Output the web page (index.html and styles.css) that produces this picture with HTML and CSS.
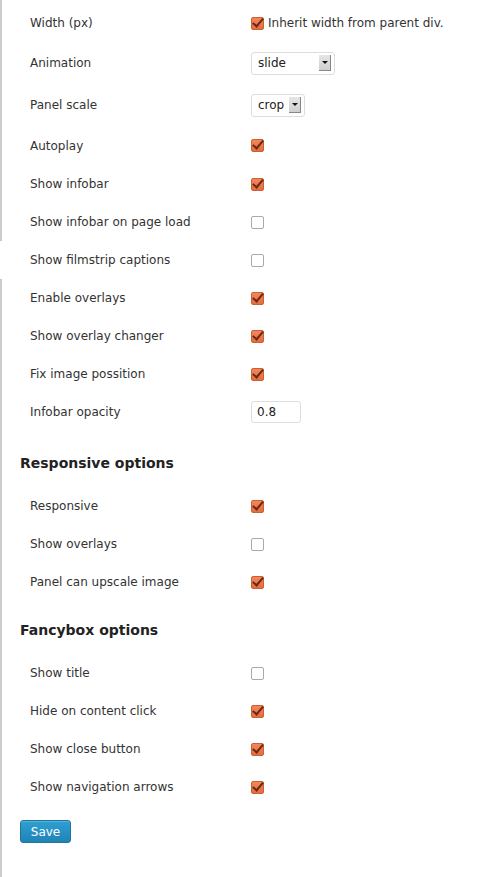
FILE: index.html
```html
<!DOCTYPE html>
<html lang="en">
<head>
  <meta charset="UTF-8">
  <title>Gallery settings</title>
  <link rel="stylesheet" href="styles.css">
</head>
<body>
  <div class="wrap">

    <!-- General options -->
    <div class="form-table">
      <div class="row r-first">
        <div class="label">Width (px)</div>
        <div class="field"><span class="cb on"></span><span class="cb-text">Inherit width from parent div.</span></div>
      </div>
      <div class="row r-select">
        <div class="label">Animation</div>
        <div class="field"><span class="select wide"><span class="val">slide</span><span class="arrow"></span></span></div>
      </div>
      <div class="row r-select">
        <div class="label">Panel scale</div>
        <div class="field"><span class="select"><span class="val">crop</span><span class="arrow"></span></span></div>
      </div>
      <div class="row r-tall">
        <div class="label">Autoplay</div>
        <div class="field"><span class="cb on"></span></div>
      </div>
      <div class="row">
        <div class="label">Show infobar</div>
        <div class="field"><span class="cb on"></span></div>
      </div>
      <div class="row">
        <div class="label">Show infobar on page load</div>
        <div class="field"><span class="cb"></span></div>
      </div>
      <div class="row gap">
        <div class="label">Show filmstrip captions</div>
        <div class="field"><span class="cb"></span></div>
      </div>
      <div class="row">
        <div class="label">Enable overlays</div>
        <div class="field"><span class="cb on"></span></div>
      </div>
      <div class="row">
        <div class="label">Show overlay changer</div>
        <div class="field"><span class="cb on"></span></div>
      </div>
      <div class="row">
        <div class="label">Fix image possition</div>
        <div class="field"><span class="cb on"></span></div>
      </div>
      <div class="row">
        <div class="label">Infobar opacity</div>
        <div class="field"><span class="text-input">0.8</span></div>
      </div>
    </div>

    <h3 class="section first">Responsive options</h3>
    <div class="form-table">
      <div class="row">
        <div class="label">Responsive</div>
        <div class="field"><span class="cb on"></span></div>
      </div>
      <div class="row">
        <div class="label">Show overlays</div>
        <div class="field"><span class="cb"></span></div>
      </div>
      <div class="row">
        <div class="label">Panel can upscale image</div>
        <div class="field"><span class="cb on"></span></div>
      </div>
    </div>

    <h3 class="section">Fancybox options</h3>
    <div class="form-table">
      <div class="row">
        <div class="label">Show title</div>
        <div class="field"><span class="cb"></span></div>
      </div>
      <div class="row">
        <div class="label">Hide on content click</div>
        <div class="field"><span class="cb on"></span></div>
      </div>
      <div class="row">
        <div class="label">Show close button</div>
        <div class="field"><span class="cb on"></span></div>
      </div>
      <div class="row">
        <div class="label">Show navigation arrows</div>
        <div class="field"><span class="cb on"></span></div>
      </div>
    </div>

    <div class="submit">
      <button class="button-primary">Save</button>
    </div>

  </div>
</body>
</html>
```

FILE: styles.css
```css
body {
  margin: 0;
  background: #fff;
  font-family: "DejaVu Sans", sans-serif;
  font-size: 12px;
  color: #333;
}

.wrap {
  border-left: 2px solid #ccc;
  padding: 4px 0 33px 18px;
  min-height: 840px;
}

.row {
  display: flex;
  align-items: center;
  height: 38px;
}

.row.r-select {
  height: 42px;
}

.row.r-tall {
  height: 39px;
}

/* the sidebar border is broken beside this row */
.row.gap {
  margin-left: -20px;
  padding-left: 20px;
  background: #fff;
}

.label {
  width: 231px;
  padding-left: 10px;
  box-sizing: border-box;
}

.field {
  display: flex;
  align-items: center;
}

.cb {
  width: 11px;
  height: 11px;
  border: 1px solid #aaa;
  border-radius: 2px;
  background: #fff;
  display: inline-block;
  position: relative;
}

.cb.on {
  background: linear-gradient(#f3875c, #e56c40);
  border-color: #c9602f;
}

.cb.on::after {
  content: "";
  position: absolute;
  left: 3px;
  top: -2px;
  width: 4px;
  height: 9px;
  border: solid #6a2a12;
  border-width: 0 2px 2px 0;
  transform: rotate(40deg);
}

.cb-text {
  margin-left: 4px;
}

.select {
  display: inline-flex;
  align-items: center;
  justify-content: space-between;
  height: 23px;
  width: 54px;
  box-sizing: border-box;
  border: 1px solid #ddd;
  border-radius: 3px;
  padding: 0 3px 0 6px;
  color: #222;
  background: #fff;
}

.select.wide {
  width: 84px;
}

.arrow {
  width: 11px;
  height: 15px;
  background: linear-gradient(#e6e6e6, #cfcfcf);
  border-right: 1px solid #888;
  border-bottom: 1px solid #888;
  position: relative;
}

.arrow::after {
  content: "";
  position: absolute;
  left: 3px;
  top: 6px;
  border: 3px solid transparent;
  border-top: 3px solid #111;
  border-bottom: 0;
}

.text-input {
  display: inline-block;
  width: 50px;
  height: 22px;
  box-sizing: border-box;
  border: 1px solid #ddd;
  border-radius: 3px;
  padding: 3px 5px;
  color: #222;
}

.section {
  margin: 0;
  padding: 20px 0 14px 0;
  font-size: 14px;
  line-height: 19px;
  font-weight: bold;
  color: #222;
}

.section.first {
  padding-top: 23px;
}

.submit {
  padding-top: 14px;
}

.button-primary {
  font-family: "DejaVu Sans", sans-serif;
  font-size: 12px;
  color: #fff;
  height: 23px;
  width: 51px;
  padding: 0;
  border: 1px solid #21759b;
  border-radius: 3px;
  background: linear-gradient(#2e9fd2, #2183b6);
  box-shadow: inset 0 1px 0 rgba(120, 200, 230, 0.5);
}
```
